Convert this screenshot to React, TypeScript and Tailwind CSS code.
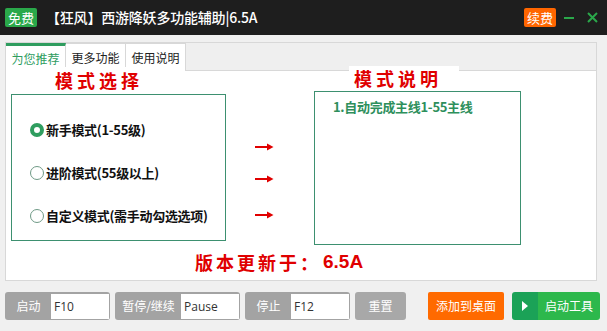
import React, { useState } from "react";

const CJK = "font-['Noto_Sans_CJK_SC','Noto_Sans',sans-serif]";

// --- hotkey groups along the bottom ---
const HOTKEYS = [
  { label: "启动", value: "F10", labelW: "w-[45px]" },
  { label: "暂停/继续", value: "Pause", labelW: "w-[65px]" },
  { label: "停止", value: "F12", labelW: "w-[45px]" },
];

const MODES = ["新手模式(1-55级)", "进阶模式(55级以上)", "自定义模式(需手动勾选选项)"];

function Radio({ checked }: { checked: boolean }) {
  return checked ? (
    <span className="w-[14px] h-[14px] rounded-full border-[4px] border-[#2f9d5f] bg-white shrink-0" />
  ) : (
    <span className="w-[14px] h-[14px] rounded-full border border-[#6f9a86] bg-white shrink-0" />
  );
}

export default function App() {
  const [mode, setMode] = useState(0);
  const [tab, setTab] = useState(0);
  const tabs = ["为您推荐", "更多功能", "使用说明"];

  return (
    <div className={`w-[607px] h-[331px] bg-[#f0f0f0] flex flex-col overflow-hidden ${CJK}`}>
      {/* Title bar */}
      <div className="h-[35px] bg-[#1e1e1e] flex items-center pl-[5px] pr-[9px] shrink-0">
        <span className="h-[19px] px-[3px] bg-[#2aa84a] text-white text-[13px] leading-[19px] rounded-[2px]">免费</span>
        <span className="ml-[9px] text-white text-[14px] font-medium tracking-[-0.2px]">【狂风】西游降妖多功能辅助|6.5A</span>
        <div className="flex-1" />
        <span className="h-[19px] px-[3px] bg-[#ff6600] text-white text-[13px] leading-[19px] rounded-[2px]">续费</span>
        <span className="ml-[8px] w-[10px] h-[2px] bg-[#2aa84a]" />
        <svg className="ml-[13px]" width="11" height="11" viewBox="0 0 11 11">
          <path d="M1 1 L10 10 M10 1 L1 10" stroke="#2aa84a" strokeWidth="2" />
        </svg>
      </div>

      {/* Main panel */}
      <div className="px-[5px] pt-[7px]">
        <div className="w-[592px] h-[239px] border border-[#d8d8d8] bg-white flex flex-col">
          <div className="h-[28px] bg-[#efefef] border-b border-[#d8d8d8] flex items-end shrink-0">
            {tabs.map((t, i) => (
              <button
                key={t}
                onClick={() => setTab(i)}
                className={`h-[28px] w-[60px] -mb-px text-[12px] flex items-center justify-center bg-white border-r border-[#d8d8d8] ${
                  tab === i ? "border-t-[3px] border-t-[#2f9d5f] text-[#2f9d5f] pt-[1px]" : "border-t border-t-[#d8d8d8] text-[#222]"
                }`}
              >
                {t}
              </button>
            ))}
          </div>

          <div className="flex-1 flex flex-col">
            <div className="flex">
              {/* Left: mode select */}
              <div className="pl-[5px] w-[244px]">
                <div className="ml-[39px] -mt-[4px] w-[110px] bg-white text-[#e00000] text-[18px] font-bold tracking-[4px] leading-[26px] pl-[5px]">
                  模式选择
                </div>
                <div className="mt-[1px] w-[215px] h-[147px] border border-[#3d9070] flex flex-col pl-[18px] pt-[26px] gap-[26px]">
                  {MODES.map((m, i) => (
                    <label key={m} onClick={() => setMode(i)} className="flex items-center gap-[2px] h-[17px] cursor-pointer">
                      <Radio checked={mode === i} />
                      <span className="text-[13px] font-bold text-[#111] tracking-[-0.3px]">{m}</span>
                    </label>
                  ))}
                </div>
              </div>

              {/* Arrows */}
              <div className="w-[64px] flex flex-col pt-[72px] pl-[5px]">
                {[0, 1, 2].map((i) => (
                  <svg
                    key={i}
                    width="19"
                    height="8"
                    viewBox="0 0 19 8"
                    className={i === 1 ? "mt-[24px]" : i === 2 ? "mt-[28px]" : ""}
                  >
                    <path d="M0 4 H15" stroke="#e00000" strokeWidth="2" />
                    <path d="M12 0.5 L18.5 4 L12 7.5 Z" fill="#e00000" />
                  </svg>
                ))}
              </div>

              {/* Right: mode description */}
              <div className="flex flex-col">
                <div className="ml-[35px] -mt-[5px] w-[110px] bg-white text-[#e00000] text-[18px] font-bold tracking-[4px] leading-[25px] pl-[5px]">
                  模式说明
                </div>
                <div className="w-[207px] h-[154px] border border-[#3d9070] pl-[18px] pt-[1px]">
                  <span className="text-[13px] font-bold text-[#2e8f5c] tracking-[-0.3px]">1.自动完成主线1-55主线</span>
                </div>
              </div>
            </div>

            <div className="mt-[5px] pl-[189px] flex items-center text-[#e00000] font-bold h-[24px]">
              <span className="text-[18px] tracking-[3px]">版本更新于：</span>
              <span className="ml-[2px] text-[19px] font-['Liberation_Sans',Arial,sans-serif]">6.5A</span>
            </div>
          </div>
        </div>
      </div>

      {/* Bottom hotkey bar */}
      <div className="mt-[11px] px-[5px] flex items-center h-[28px]">
        {HOTKEYS.map((h) => (
          <div key={h.label} className="h-[28px] mr-[5px] bg-[#a3a3a3] rounded-[3px] flex items-center p-[1px]">
            <span className={`${h.labelW} text-center text-white text-[12px]`}>{h.label}</span>
            <span className="w-[58px] h-[25px] bg-white text-[#333] text-[12px] leading-[25px] pl-[3px] font-['Open_Sans',sans-serif]">
              {h.value}
            </span>
          </div>
        ))}
        <button className="w-[51px] h-[28px] bg-[#a8a8a8] rounded-[3px] text-white text-[12px]">重置</button>
        <button className="ml-[22px] w-[76px] h-[28px] bg-[#ff6a00] rounded-[2px] text-white text-[12px]">添加到桌面</button>
        <button className="ml-[8px] w-[88px] h-[28px] rounded-[3px] flex overflow-hidden">
          <span className="w-[26px] h-full bg-[#1ba257] flex items-center justify-center">
            <svg width="6" height="10" viewBox="0 0 6 10">
              <path d="M0 0 L6 5 L0 10 Z" fill="white" />
            </svg>
          </span>
          <span className="flex-1 h-full bg-[#2db84c] text-white text-[12px] flex items-center justify-center">启动工具</span>
        </button>
      </div>
    </div>
  );
}
